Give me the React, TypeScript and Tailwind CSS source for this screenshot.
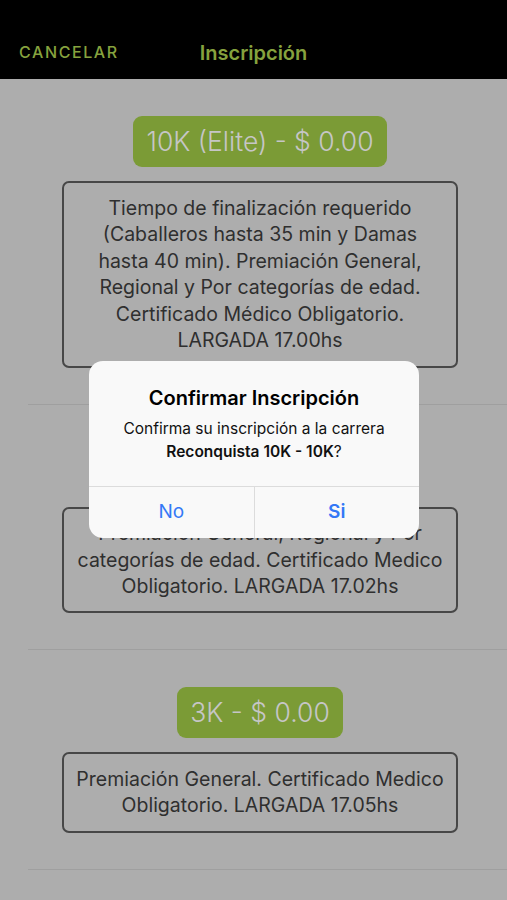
const font = { fontFamily: 'Inter, "Noto Sans", sans-serif' };

type Race = { id: string; label: string; lines: string[] };

const races: Race[] = [
  {
    id: 'elite',
    label: '10K (Elite) - $ 0.00',
    lines: [
      'Tiempo de finalización requerido',
      '(Caballeros hasta 35 min y Damas',
      'hasta 40 min). Premiación General,',
      'Regional y Por categorías de edad.',
      'Certificado Médico Obligatorio.',
      'LARGADA 17.00hs',
    ],
  },
  {
    id: '10k',
    label: '10K - $ 0.00',
    lines: [
      'Premiación General, Regional y Por',
      'categorías de edad. Certificado Medico',
      'Obligatorio. LARGADA 17.02hs',
    ],
  },
  {
    id: '3k',
    label: '3K - $ 0.00',
    lines: ['Premiación General. Certificado Medico', 'Obligatorio. LARGADA 17.05hs'],
  },
];

function RaceItem({ race }: { race: Race }) {
  return (
    <div className="ml-[28px] pr-[15px] border-b border-[#9f9f9f] pt-[37px] pb-[36px]">
      <div className="flex flex-col items-center">
        <div className="h-[51px] px-[13px] rounded-[9px] bg-[#7b9b36] flex items-center text-[26.5px] font-light text-[#c6c6c6]">
          {race.label}
        </div>
        <div className="mt-[14px] w-[396px] border-2 border-[#474747] rounded-[7px] py-[11.5px] px-[8px] text-center text-[19.5px] leading-[26.6px] text-[#2f2f2f]">
          {race.lines.map((l) => (
            <div key={l} className="whitespace-nowrap">{l}</div>
          ))}
        </div>
      </div>
    </div>
  );
}

export default function App() {
  return (
    <div style={font} className="relative w-[507px] h-[900px] overflow-hidden bg-[#adadad]">
      <header className="h-[79px] bg-black relative flex items-end pb-[17px]">
        <button className="ml-[19px] text-[16px] font-medium tracking-[1.6px] text-[#86a23e] leading-none pb-[2px]">
          CANCELAR
        </button>
        <h1 className="absolute left-0 right-0 bottom-[16px] text-center text-[20px] font-semibold text-[#86a23e] leading-none">
          Inscripción
        </h1>
      </header>

      <div className="w-[507px]">
        {races.map((r) => (
          <RaceItem key={r.id} race={r} />
        ))}
      </div>

      <div className="absolute left-[89px] top-[361px] w-[330px] rounded-[14px] bg-[#f9f9f9] overflow-hidden">
        <div className="pt-[24px] pb-[23px] px-[12px] text-center">
          <div className="text-[20px] font-semibold text-black leading-[26px]">Confirmar Inscripción</div>
          <div className="mt-[6px] text-[15.5px] leading-[23px] text-[#111]">
            <div>Confirma su inscripción a la carrera</div>
            <div>
              <span className="font-semibold">Reconquista 10K - 10K</span>?
            </div>
          </div>
        </div>
        <div className="flex border-t border-[#dcdcdc] h-[52px]">
          <button className="flex-1 text-[19px] text-[#3478f6] border-r border-[#dcdcdc]">No</button>
          <button className="flex-1 text-[19px] font-semibold text-[#3478f6]">Si</button>
        </div>
      </div>
    </div>
  );
}
